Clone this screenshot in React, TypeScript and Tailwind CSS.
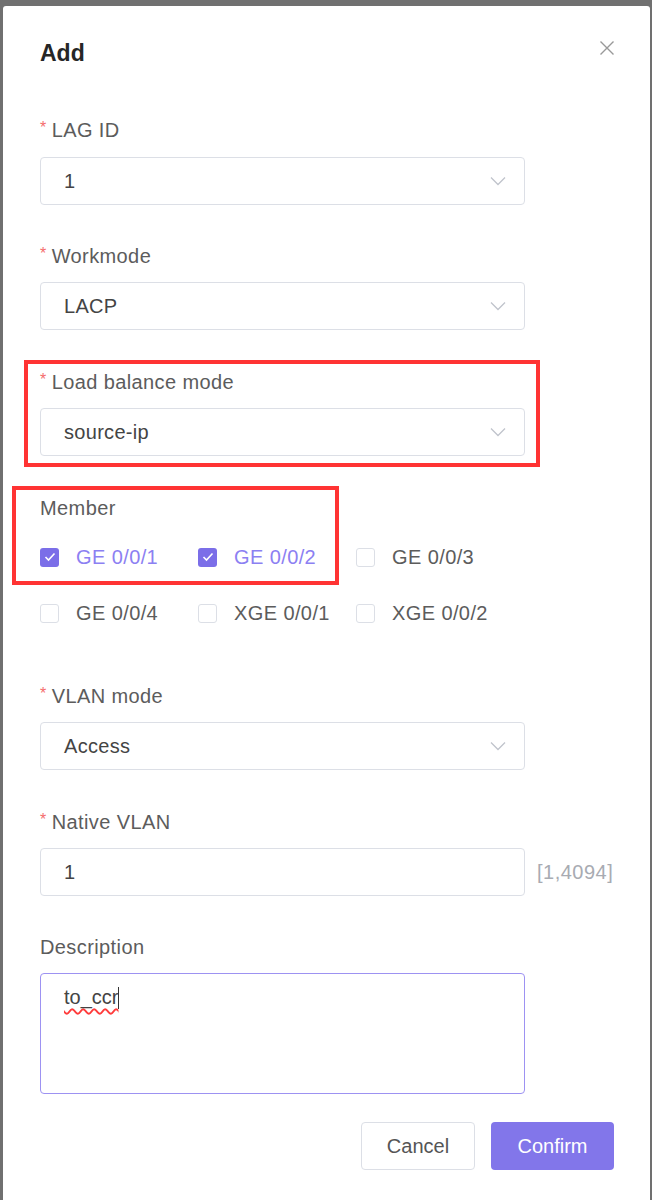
import React from "react";

const font = { fontFamily: '"Liberation Sans", Arial, sans-serif' };

function Chevron() {
  return (
    <svg width="16" height="10" viewBox="0 0 16 10" fill="none" className="shrink-0">
      <path d="M1 1.5 L8 8.5 L15 1.5" stroke="#c0c4cc" strokeWidth="1.3" />
    </svg>
  );
}

function Label({ text, required = true }: { text: string; required?: boolean }) {
  return (
    <div className="h-[26px] flex items-center text-[20px] tracking-[0.4px] text-[#5c5c5c] leading-[26px]">
      {required && <span className="text-[#f56c6c] text-[16px] mr-[5px] -mt-[4px]">*</span>}
      <span>{text}</span>
    </div>
  );
}

function Select({ value }: { value: string }) {
  return (
    <div className="w-[485px] h-[48px] border border-[#dcdfe6] rounded-[4px] flex items-center justify-between pl-[23px] pr-[18px] text-[20px] tracking-[0.3px] text-[#444]">
      <span>{value}</span>
      <Chevron />
    </div>
  );
}

function Check({ label, checked }: { label: string; checked?: boolean }) {
  return (
    <div className="flex items-center h-[28px]">
      {checked ? (
        <div className="w-[19px] h-[19px] rounded-[3px] bg-[#7b6ee8] flex items-center justify-center">
          <svg width="12" height="10" viewBox="0 0 12 10" fill="none">
            <path d="M1.5 5 L4.5 8 L10.5 1.5" stroke="#fff" strokeWidth="1.6" />
          </svg>
        </div>
      ) : (
        <div className="w-[19px] h-[19px] rounded-[3px] border border-[#dcdfe6] bg-white" />
      )}
      <span className={`ml-[17px] text-[20px] tracking-[0.4px] ${checked ? "text-[#8c80f2]" : "text-[#5c5c5c]"}`}>{label}</span>
    </div>
  );
}

export default function App() {
  return (
    <div className="w-[652px] h-[1200px] bg-[#707070] pt-[6px] pl-[3px] pr-[2px] overflow-hidden" style={font}>
      <div className="bg-white h-full rounded-t-[3px] pl-[37px] pr-[36px] flex flex-col">
        <div className="mt-[34px] h-[26px] flex items-center justify-between">
          <span className="text-[23px] font-bold text-[#262626]">Add</span>
          <svg width="16" height="16" viewBox="0 0 16 16" fill="none" className="mr-[-1px] -mt-[10px]">
            <path d="M1.5 1.5 L14.5 14.5 M14.5 1.5 L1.5 14.5" stroke="#999" strokeWidth="1.4" />
          </svg>
        </div>

        <div className="mt-[51px]">
          <Label text="LAG ID" />
          <div className="mt-[14px]">
            <Select value="1" />
          </div>
        </div>

        <div className="mt-[38px]">
          <Label text="Workmode" />
          <div className="mt-[13px]">
            <Select value="LACP" />
          </div>
        </div>

        <div className="mt-[39px] relative">
          <div className="absolute left-[-16px] top-[-9px] w-[516px] h-[107px] border-[4px] border-[#ff3333]" />
          <Label text="Load balance mode" />
          <div className="mt-[13px]">
            <Select value="source-ip" />
          </div>
        </div>

        <div className="mt-[39px] relative">
          <div className="absolute left-[-28px] top-[-9px] w-[327px] h-[99px] border-[4px] border-[#ff3333]" />
          <Label text="Member" required={false} />
          <div className="mt-[22px] grid grid-cols-[158px_158px_158px] gap-y-[28px]">
            <Check label="GE 0/0/1" checked />
            <Check label="GE 0/0/2" checked />
            <Check label="GE 0/0/3" />
            <Check label="GE 0/0/4" />
            <Check label="XGE 0/0/1" />
            <Check label="XGE 0/0/2" />
          </div>
        </div>

        <div className="mt-[56px]">
          <Label text="VLAN mode" />
          <div className="mt-[13px]">
            <Select value="Access" />
          </div>
        </div>

        <div className="mt-[39px]">
          <Label text="Native VLAN" />
          <div className="mt-[13px] flex items-center">
            <div className="w-[485px] h-[48px] border border-[#dcdfe6] rounded-[4px] flex items-center pl-[23px] text-[20px] text-[#444]">
              1
            </div>
            <span className="ml-[12px] text-[20px] tracking-[0.5px] text-[#a8abb2]">[1,4094]</span>
          </div>
        </div>

        <div className="mt-[38px]">
          <Label text="Description" required={false} />
          <div className="mt-[13px] w-[485px] h-[121px] border border-[#9d92f2] rounded-[4px] pl-[23px] pt-[8px] text-[20px] text-[#444]">
            <span className="underline decoration-wavy decoration-[#ff3b3b] decoration-[1.5px] underline-offset-[4px]">to_ccr</span>
            <span className="inline-block w-[1px] h-[22px] bg-[#333] align-middle -mt-[2px]" />
          </div>
        </div>

        <div className="mt-[28px] flex justify-end gap-[16px]">
          <div className="w-[114px] h-[48px] border border-[#dcdfe6] rounded-[4px] flex items-center justify-center text-[20px] text-[#555]">
            Cancel
          </div>
          <div className="w-[123px] h-[48px] rounded-[4px] bg-[#8276ea] flex items-center justify-center text-[20px] text-white">
            Confirm
          </div>
        </div>
      </div>
    </div>
  );
}
